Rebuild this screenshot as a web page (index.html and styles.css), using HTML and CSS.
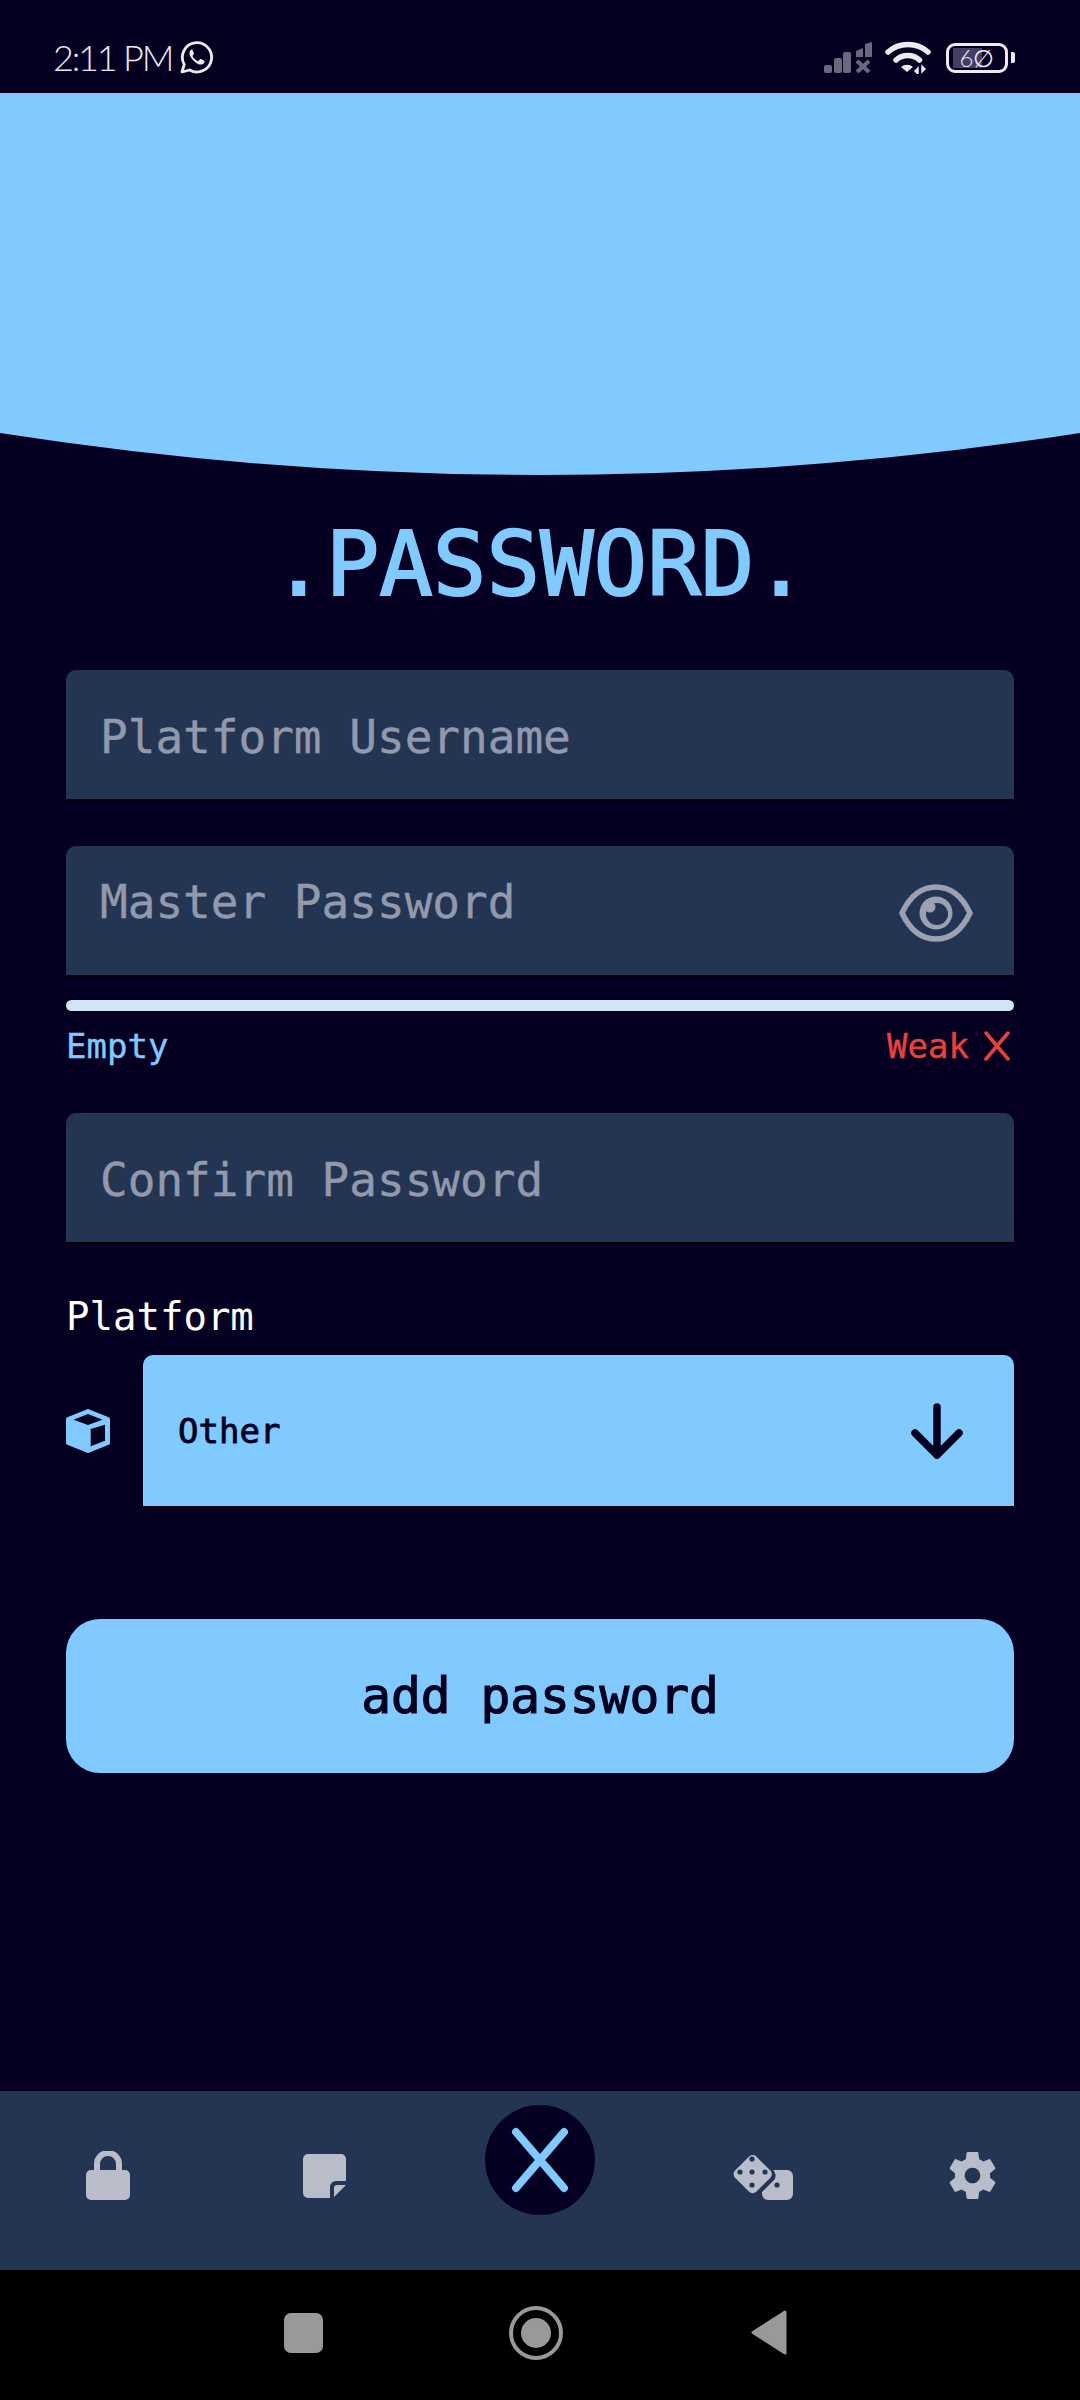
FILE: index.html
```html
<!DOCTYPE html>
<html lang="en">
<head>
    <meta charset="UTF-8">
    <meta name="viewport" content="width=device-width, initial-scale=1.0">
    <title>Add Password</title>
    <link rel="stylesheet" href="styles.css">
</head>
<body>
    <header class="status-bar">
        <div class="status-left">
            <span class="clock">2:11 PM</span>
            <svg class="whatsapp" viewBox="0 0 33 33">
                <path d="M2 31l2.2-7.6A14.6 14.6 0 1 1 9.7 29z" fill="none" stroke="#ece9f2" stroke-width="2.8" stroke-linejoin="round"/>
                <path d="M11.6 8.6c-1.5.6-2.6 2.6-2 4.8 1 3.900 5.800 8.800 9.900 10 2.300.6 4.300-.6 4.900-2.200.3-.8.200-1.300-.2-1.500l-3.300-1.600c-.5-.2-.9-.1-1.200.3l-1 1.300c-.3.3-.6.400-1 .2-2-.8-3.900-2.500-5-4.500-.2-.4-.1-.7.100-1l.9-1.100c.3-.4.300-.7.100-1.100l-1.400-3.200c-.2-.5-.5-.6-1.800-.4z" fill="#ece9f2"/>
            </svg>
        </div>
        <div class="status-right">
            <svg class="signal" viewBox="0 0 48 31">
                <g fill="#6b677f">
                    <rect x="0" y="23" width="8" height="8" rx="2"/>
                    <rect x="10" y="16" width="8" height="15" rx="2"/>
                    <rect x="19" y="10" width="8" height="21" rx="2"/>
                    <path d="M32 9l7-3v9h-7z"/>
                    <path d="M41 2l7-2v15h-7z"/>
                </g>
                <path d="M33 19l12 11M45 19L33 30" stroke="#6b677f" stroke-width="4" fill="none"/>
            </svg>
            <svg class="wifi" viewBox="0 0 46 33">
                <g fill="none" stroke="#ece9f2" stroke-width="5.500" stroke-linecap="round">
                    <path d="M3 11c11-10 29-10 40 0"/>
                    <path d="M11 19c6.500-6 17-6 23.500 0"/>
                </g>
                <path d="M16 26c3.500-3 8.500-3 12 0l-6 5z" fill="#ece9f2"/>
                <path d="M33 33v-6l-3 3zM37 25v6l3-3z" fill="#ece9f2" stroke="#ece9f2" stroke-width="1.500"/>
            </svg>
            <div class="battery"><span class="battery-level">6∅</span></div>
            <div class="battery-nub"></div>
        </div>
    </header>

    <svg class="curve" viewBox="0 0 1080 382" preserveAspectRatio="none">
        <path d="M0 0H1080V340Q540 424 0 340Z" fill="#80caff"/>
    </svg>

    <main class="form">
        <h1 class="title">.PASSWORD.</h1>

        <div class="field">Platform Username</div>

        <div class="field field-password">
            <span class="field-top">Master Password</span>
            <svg class="eye" viewBox="0 0 74 58">
                <path d="M3 29C11 12 23 3 37 3s26 9 34 26c-8 17-20 26-34 26S11 46 3 29z" fill="none" stroke="#9ba1b2" stroke-width="5.500" stroke-linejoin="round"/>
                <circle cx="37" cy="29" r="16.500" fill="#9ba1b2"/>
                <circle cx="38" cy="30" r="11" fill="#243453"/>
                <circle cx="31" cy="23" r="5.500" fill="#9ba1b2"/>
            </svg>
        </div>

        <div class="strength-bar"></div>
        <div class="strength-row">
            <span class="strength-empty">Empty</span>
            <span class="strength-weak">Weak
                <svg class="weak-x" viewBox="0 0 26 30">
                    <path d="M2 2l22 26M24 2L2 28" fill="none" stroke="#e8423a" stroke-width="3.500" stroke-linecap="round"/>
                </svg>
            </span>
        </div>

        <div class="field field-confirm">Confirm Password</div>

        <div class="platform-label">Platform</div>
        <div class="platform-row">
            <svg class="cube" viewBox="0 0 44 44">
                <path d="M22 2L42 10V34L22 42L2 34V10Z" fill="#80caff" stroke="#80caff" stroke-width="4" stroke-linejoin="round"/>
                <path d="M7.500 10.700L22 5L36.500 10.700L22 16Z" fill="#03001f"/>
                <path d="M24.700 20L39 15.700V31.700L24.700 37.300Z" fill="#03001f"/>
            </svg>
            <div class="select">
                <span>Other</span>
                <svg class="arrow" viewBox="0 0 52 56">
                    <path d="M26 4V52M4 30L26 52L48 30" fill="none" stroke="#03001f" stroke-width="7.500" stroke-linecap="round" stroke-linejoin="round"/>
                </svg>
            </div>
        </div>

        <button class="add-button">add password</button>
    </main>

    <nav class="nav">
        <svg class="nav-icon lock" viewBox="0 0 44 49">
            <path d="M11 20V13a11 11 0 0 1 22 0v7" fill="none" stroke="#b9bdc9" stroke-width="6"/>
            <rect x="0" y="19" width="44" height="30" rx="5" fill="#b9bdc9"/>
        </svg>
        <svg class="nav-icon note" viewBox="0 0 43 44">
            <path d="M5 0H38a5 5 0 0 1 5 5V27H33a6 6 0 0 0-6 6V44H5a5 5 0 0 1-5-5V5A5 5 0 0 1 5 0Z" fill="#b9bdc9"/>
            <path d="M31 43V34a3 3 0 0 1 3-3H43Z" fill="#b9bdc9"/>
        </svg>
        <div class="fab">
            <svg class="fab-x" viewBox="0 0 58 66">
                <path d="M5 5L53 61M53 5L5 61" fill="none" stroke="#80caff" stroke-width="8" stroke-linecap="round"/>
            </svg>
        </div>
        <svg class="nav-icon dice" viewBox="0 0 61 49">
            <rect x="7" y="7" width="30" height="30" rx="5" transform="rotate(45 20 21)" fill="#b9bdc9"/>
            <g fill="#243453">
                <circle cx="20" cy="8" r="2.600"/>
                <circle cx="8" cy="21" r="2.600"/>
                <circle cx="20" cy="21" r="2.600"/>
                <circle cx="33" cy="21" r="2.600"/>
                <circle cx="20" cy="34" r="2.600"/>
            </g>
            <path d="M41 19H55a6 6 0 0 1 6 6V43a6 6 0 0 1-6 6H36a6 6 0 0 1-6-6V41L41 30a7 7 0 0 0 0-11Z" fill="#b9bdc9"/>
            <circle cx="45" cy="34" r="2.600" fill="#243453"/>
        </svg>
        <svg class="nav-icon gear" viewBox="2.400 2 19.200 20">
            <path fill="#b9bdc9" d="M19.140 12.940c.04-.3.06-.61.06-.94 0-.32-.02-.64-.07-.94l2.030-1.580c.18-.14.23-.41.12-.61l-1.920-3.320c-.12-.22-.37-.29-.59-.22l-2.390.96c-.5-.38-1.030-.7-1.620-.94l-.36-2.540c-.04-.24-.24-.41-.48-.41h-3.840c-.24 0-.43.17-.47.41l-.36 2.540c-.59.24-1.130.57-1.620.94l-2.390-.96c-.22-.08-.47 0-.59.22L2.740 8.870c-.12.21-.08.47.12.61l2.030 1.580c-.05.3-.09.63-.09.94s.02.64.07.94l-2.030 1.580c-.18.14-.23.41-.12.61l1.920 3.320c.12.22.37.29.59.22l2.390-.96c.5.38 1.030.7 1.620.94l.36 2.540c.05.24.24.41.48.41h3.840c.24 0 .44-.17.47-.41l.36-2.540c.59-.24 1.130-.56 1.620-.94l2.390.96c.22.08.47 0 .59-.22l1.920-3.320c.12-.22.07-.47-.12-.61l-2.010-1.580zM12 15.200c-1.760 0-3.200-1.440-3.200-3.200s1.440-3.200 3.200-3.200 3.200 1.440 3.200 3.200-1.440 3.200-3.200 3.200z"/>
        </svg>
    </nav>

    <footer class="system-nav">
        <div class="sys-slot"><div class="sys-square"></div></div>
        <div class="sys-slot"><div class="sys-circle"><div class="sys-dot"></div></div></div>
        <div class="sys-slot">
            <svg class="sys-back" viewBox="0 0 36 45">
                <path d="M34 2L2 22.500L34 43Z" fill="#999" stroke="#999" stroke-width="3" stroke-linejoin="round"/>
            </svg>
        </div>
    </footer>
</body>
</html>
```

FILE: styles.css
```css
* {
    box-sizing: border-box;
}
body {
    width: 1080px;
    height: 2400px;
    margin: 0;
    display: flex;
    flex-direction: column;
    background: #050021;
    font-family: 'DejaVu Sans Mono', 'Liberation Mono', monospace;
    overflow: hidden;
}

/* status bar */
.status-bar {
    height: 93px;
    flex: none;
    display: flex;
    justify-content: space-between;
    align-items: flex-start;
    padding: 41px 65px 0 53px;
}
.status-left {
    display: flex;
    align-items: center;
    gap: 8px;
}
.clock {
    font-family: 'Lato', sans-serif;
    font-weight: 300;
    font-size: 36px;
    line-height: 33px;
    letter-spacing: -2.2px;
    color: #ece9f2;
}
.whatsapp {
    width: 33px;
    height: 33px;
}
.status-right {
    display: flex;
    align-items: center;
}
.signal {
    width: 48px;
    height: 31px;
    margin-right: 13px;
}
.wifi {
    width: 46px;
    height: 33px;
    margin-right: 15px;
}
.battery {
    width: 62px;
    height: 30px;
    border: 3px solid #ece9f2;
    border-radius: 9px;
    background: linear-gradient(#443f62, #443f62) no-repeat 4px center / 29px 20px;
    display: flex;
    align-items: center;
    justify-content: center;
}
.battery-level {
    font-family: 'Lato', sans-serif;
    font-weight: 300;
    font-size: 24px;
    line-height: 24px;
    color: #ece9f2;
}
.battery-nub {
    width: 4px;
    height: 11px;
    margin-left: 3px;
    border-radius: 0 2px 2px 0;
    background: #ece9f2;
}

.curve {
    display: block;
    flex: none;
    width: 1080px;
    height: 382px;
}

/* form */
.form {
    flex: 1;
    padding: 0 66px;
}
.title {
    margin: 30px 0 47px;
    height: 118px;
    line-height: 118px;
    text-align: center;
    font-size: 89px;
    font-weight: normal;
    -webkit-text-stroke: 2px #80caff;
    color: #80caff;
}
.field {
    height: 129px;
    padding: 4px 0 0 34px;
    display: flex;
    align-items: center;
    font-size: 46px;
    -webkit-text-stroke: 0.4px #9399ac;
    color: #9399ac;
    background: #243453;
    border-radius: 10px 10px 0 0;
    box-shadow: 0 2px 0 #000;
}
.field-password {
    margin-top: 47px;
    justify-content: space-between;
    padding-right: 41px;
}
.field-top {
    margin-bottom: 22px;
}
.eye {
    width: 74px;
    height: 58px;
}
.strength-bar {
    height: 11px;
    margin-top: 25px;
    background: #d0e6f6;
    border-radius: 6px;
}
.strength-row {
    display: flex;
    justify-content: space-between;
    align-items: center;
    height: 36px;
    margin-top: 17px;
    font-size: 34px;
    font-weight: normal;
}
.strength-empty {
    color: #80caff;
    -webkit-text-stroke: 0.4px #80caff;
}
.strength-weak {
    display: flex;
    align-items: center;
    gap: 15px;
    padding-right: 4px;
    color: #e8423a;
    -webkit-text-stroke: 0.4px #e8423a;
}
.weak-x {
    width: 26px;
    height: 30px;
}
.field-confirm {
    margin-top: 49px;
}
.platform-label {
    margin-top: 53px;
    height: 44px;
    line-height: 44px;
    font-size: 39px;
    color: #fff;
}
.platform-row {
    display: flex;
    align-items: center;
    gap: 33px;
    margin-top: 16px;
}
.cube {
    width: 44px;
    height: 44px;
    flex: none;
}
.select {
    flex: 1;
    height: 151px;
    padding: 0 51px 0 35px;
    display: flex;
    justify-content: space-between;
    align-items: center;
    font-size: 34px;
    color: #03001f;
    -webkit-text-stroke: 0.8px #03001f;
    background: #80caff;
    border-radius: 10px 10px 0 0;
    box-shadow: 0 2px 3px rgba(0, 0, 0, 0.5);
}
.arrow {
    width: 52px;
    height: 56px;
}
.add-button {
    display: block;
    width: 100%;
    height: 154px;
    margin-top: 113px;
    padding: 0;
    border: none;
    border-radius: 34px;
    background: #80caff;
    color: #03001f;
    font-family: inherit;
    font-size: 49.500px;
    -webkit-text-stroke: 1.2px #03001f;
}

/* bottom nav */
.nav {
    height: 179px;
    flex: none;
    display: grid;
    grid-template-columns: repeat(5, 216px);
    justify-items: center;
    align-items: center;
    padding-bottom: 10px;
    background: #243453;
}
.nav-icon {
    height: 49px;
}
.lock {
    width: 44px;
}
.note {
    width: 43px;
    height: 44px;
}
.dice {
    width: 61px;
    margin-left: 12px;
}
.gear {
    width: 47px;
}
.fab {
    width: 110px;
    height: 110px;
    margin-bottom: 32px;
    border-radius: 50%;
    background: #050021;
    display: flex;
    align-items: center;
    justify-content: center;
}
.fab-x {
    width: 58px;
    height: 66px;
}

/* android nav */
.system-nav {
    height: 130px;
    flex: none;
    display: flex;
    justify-content: center;
    align-items: center;
    padding: 0 8px 5px 0;
    background: #000;
}
.sys-slot {
    width: 233px;
    display: flex;
    justify-content: center;
}
.sys-square {
    width: 39px;
    height: 40px;
    border-radius: 7px;
    background: #999;
}
.sys-circle {
    width: 54px;
    height: 54px;
    border: 4px solid #999;
    border-radius: 50%;
    display: flex;
    align-items: center;
    justify-content: center;
}
.sys-dot {
    width: 30px;
    height: 30px;
    border-radius: 50%;
    background: #999;
}
.sys-back {
    width: 36px;
    height: 45px;
}
```
